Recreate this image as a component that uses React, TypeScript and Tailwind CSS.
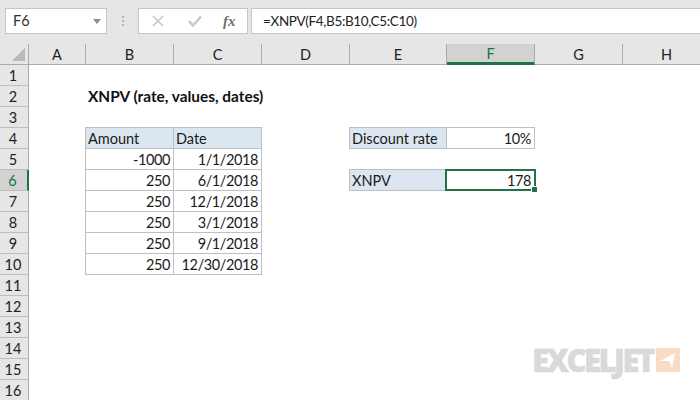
const colWidths = "grid-cols-[29px_57px_88px_88px_88px_97px_88px_88px_88px]";
const columns = ["A", "B", "C", "D", "E", "F", "G", "H"];
const rows = Array.from({ length: 16 }, (_, i) => i + 1);

type Cell = {
  text: string;
  align?: "left" | "right";
  fill?: boolean;
  top?: boolean;
  left?: boolean;
  selected?: boolean;
};

const cells: Record<string, Cell> = {
  B4: { text: "Amount", fill: true, top: true, left: true },
  C4: { text: "Date", fill: true, top: true },
  B5: { text: "-1000", align: "right", left: true },
  C5: { text: "1/1/2018", align: "right" },
  B6: { text: "250", align: "right", left: true },
  C6: { text: "6/1/2018", align: "right" },
  B7: { text: "250", align: "right", left: true },
  C7: { text: "12/1/2018", align: "right" },
  B8: { text: "250", align: "right", left: true },
  C8: { text: "3/1/2018", align: "right" },
  B9: { text: "250", align: "right", left: true },
  C9: { text: "9/1/2018", align: "right" },
  B10: { text: "250", align: "right", left: true },
  C10: { text: "12/30/2018", align: "right" },
  E4: { text: "Discount rate", fill: true, top: true, left: true },
  F4: { text: "10%", align: "right", top: true },
  E6: { text: "XNPV", fill: true, top: true, left: true },
  F6: { text: "178", align: "right", top: true, selected: true },
};

function FormulaBar() {
  return (
    <div className="flex h-[44px] items-start bg-[#e6e6e6] pt-[8px] pl-[5px]">
      {/* Name box */}
      <div className="flex h-[26px] w-[102px] items-center justify-between border border-[#c6c6c6] bg-white pr-[5px] pl-[7px] text-[#333]">
        <span>F6</span>
        <svg width="8" height="5" viewBox="0 0 8 5">
          <path d="M0 0H8L4 5Z" fill="#8c8c8c" />
        </svg>
      </div>
      <div className="flex h-[26px] w-[31px] flex-col items-center justify-center gap-[2px]">
        <span className="h-[2px] w-[2px] bg-[#b4b4b4]" />
        <span className="h-[2px] w-[2px] bg-[#b4b4b4]" />
        <span className="h-[2px] w-[2px] bg-[#b4b4b4]" />
      </div>
      {/* Cancel, enter, fx */}
      <div className="flex h-[26px] w-[110px] items-center border border-[#c6c6c6] bg-white pl-[13px]">
        <svg width="12" height="12" viewBox="0 0 12 12">
          <path d="M1 1L11 11M11 1L1 11" stroke="#c9c9c9" strokeWidth="1.7" fill="none" />
        </svg>
        <svg className="ml-[24px]" width="14" height="12" viewBox="0 0 14 12">
          <path d="M1 6L5 10.5L13 1.5" stroke="#c9c9c9" strokeWidth="2.6" fill="none" />
        </svg>
        <span className="ml-[21px] font-['Liberation_Serif',serif] text-[15px] font-bold text-[#707070] italic">
          fx
        </span>
      </div>
      <div className="ml-[3px] flex h-[26px] flex-1 items-center border-y border-l border-[#c6c6c6] bg-white pl-[11px] text-[13.5px] tracking-[-0.35px] text-[#222]">
        =XNPV(F4,B5:B10,C5:C10)
      </div>
    </div>
  );
}

function SheetCell({ cell }: { cell?: Cell }) {
  if (!cell) return <div className="bg-white" />;
  return (
    <div
      className={`relative flex items-center border-r border-b border-[#bfbfbf] pt-px pr-[3px] pl-[2px] text-[#1a1a1a] ${
        cell.align === "right" ? "justify-end tracking-[-0.4px]" : "justify-start"
      } ${cell.fill ? "bg-[#dce6f1]" : "bg-white"} ${cell.top ? "-mt-px border-t" : ""} ${
        cell.left ? "-ml-px border-l" : ""
      }`}
    >
      {cell.text}
      {cell.selected && (
        <>
          <span className="absolute -top-px -right-[2px] -bottom-px -left-[2px] border-2 border-[#217346]" />
          <span className="absolute -right-[4px] -bottom-[3px] box-content h-[5px] w-[5px] border border-white bg-[#217346]" />
        </>
      )}
    </div>
  );
}

function Sheet() {
  return (
    <div className={`grid ${colWidths} auto-rows-[21px]`}>
      {/* Column headers */}
      <div className="relative border-r border-b border-[#ababab] bg-[#e6e6e6]">
        <svg className="absolute top-[4px] left-[12px]" width="13" height="13" viewBox="0 0 13 13">
          <path d="M13 0V13H0Z" fill="#b8b8b8" />
        </svg>
      </div>
      {columns.map((c) => (
        <div
          key={c}
          className={`flex items-center justify-center border-r pt-px ${
            c === "F"
              ? "border-b-[3px] border-r-[#ababab] border-b-[#217346] bg-[#d2d2d2] text-[#217346]"
              : "border-b border-[#ababab] bg-[#e6e6e6] text-[#222]"
          }`}
        >
          {c}
        </div>
      ))}

      {rows.map((r) => (
        <div key={r} className="contents">
          <div
            className={`flex items-center justify-center border-b pt-px pr-[2px] ${
              r === 6
                ? "border-r-2 border-b-[#bdbdbd] border-r-[#217346] bg-[#d2d2d2] text-[#217346]"
                : "border-r border-[#bdbdbd] border-r-[#ababab] bg-[#e6e6e6] text-[#222]"
            }`}
          >
            {r}
          </div>
          {columns.map((c) => {
            const id = `${c}${r}`;
            if (id === "C2" || id === "D2") return null;
            if (id === "B2") {
              return (
                <div
                  key={id}
                  className="col-span-3 flex items-center bg-white pl-[2px] text-[15.4px] font-bold whitespace-nowrap text-[#111]"
                >
                  XNPV (rate, values, dates)
                </div>
              );
            }
            return <SheetCell key={id} cell={cells[id]} />;
          })}
        </div>
      ))}
    </div>
  );
}

function Logo() {
  return (
    <div className="absolute top-[341px] left-[532px] flex items-center gap-[3px]">
      <span className="font-['Open_Sans',sans-serif] text-[31px] leading-[38px] font-extrabold tracking-[-2.5px] text-[#d9d9d9] [-webkit-text-stroke:0.5px_#d9d9d9]">
        EXCELJET
      </span>
      <svg width="24" height="24" viewBox="0 0 24 24">
        <rect width="24" height="24" fill="#f8dcc6" />
        <path d="M4 13L19 5L16 20L13 13Z" fill="white" />
      </svg>
    </div>
  );
}

export default function App() {
  return (
    <div className="relative h-[400px] w-[700px] overflow-hidden bg-white font-['Lato','Liberation_Sans',sans-serif] text-[14.5px]">
      <FormulaBar />
      <Sheet />
      <Logo />
    </div>
  );
}
